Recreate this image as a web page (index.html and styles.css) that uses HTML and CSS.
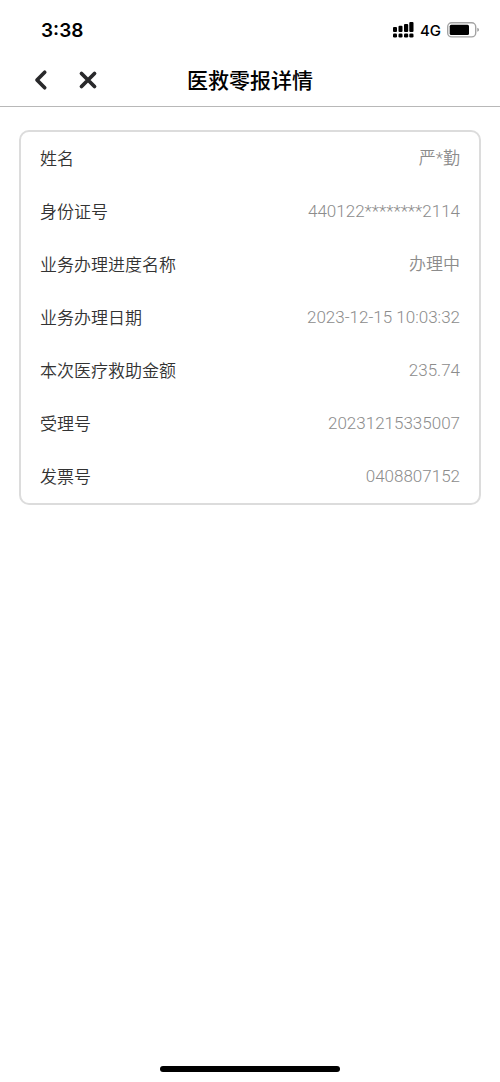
FILE: index.html
```html
<!DOCTYPE html>
<html lang="zh-CN">
<head>
<meta charset="utf-8">
<meta name="viewport" content="width=device-width, initial-scale=1">
<title>医救零报详情</title>
<link rel="stylesheet" href="styles.css">
</head>
<body>
<div class="status">
  <span class="time">3:38</span>
  <div class="indicators">
    <svg class="signal" width="21" height="16" viewBox="0 0 21 16" aria-hidden="true">
      <g fill="#000">
        <rect x="0" y="5" width="4" height="5" rx="1"/><rect x="5.5" y="3.8" width="4" height="6.2" rx="1"/><rect x="11" y="2" width="4.2" height="8" rx="1"/><rect x="16.3" y="0" width="4.2" height="10" rx="1"/>
        <rect x="0" y="11.5" width="4" height="4" rx="1.3"/><rect x="5.5" y="11.5" width="4" height="4" rx="1.3"/><rect x="11" y="11.5" width="4.2" height="4" rx="1.3"/><rect x="16.3" y="11.5" width="4.2" height="4" rx="1.3"/>
      </g>
    </svg>
    <span class="network">4G</span>
    <svg width="33" height="16" viewBox="0 0 33 16" aria-hidden="true">
      <rect x="0.7" y="0.7" width="28" height="14.2" rx="4" fill="#fff" stroke="#a3a3a3" stroke-width="1.4"/>
      <rect x="2.7" y="2.7" width="19.3" height="10.2" rx="1.5" fill="#000"/>
      <path d="M30.3 5.8q1.7.4 1.7 2t-1.7 2z" fill="#999"/>
    </svg>
  </div>
</div>
<header class="nav">
  <div class="actions">
    <button class="icon" type="button" aria-label="返回">
      <svg width="20" height="22" viewBox="0 0 20 22"><path d="M13.7 3.2 6 11l7.7 7.8" fill="none" stroke="#29292b" stroke-width="3.7" stroke-linecap="round" stroke-linejoin="round"/></svg>
    </button>
    <button class="icon" type="button" aria-label="关闭">
      <svg width="20" height="22" viewBox="0 0 20 22"><path d="m3.5 4.5 13 13m0-13-13 13" fill="none" stroke="#29292b" stroke-width="3.8" stroke-linecap="round"/></svg>
    </button>
  </div>
  <h1 class="title">医救零报详情</h1>
</header>
<main class="content">
  <dl class="card">
    <div class="row"><dt>姓名</dt><dd>严*勤</dd></div>
    <div class="row"><dt>身份证号</dt><dd>440122********2114</dd></div>
    <div class="row"><dt>业务办理进度名称</dt><dd>办理中</dd></div>
    <div class="row"><dt>业务办理日期</dt><dd>2023-12-15 10:03:32</dd></div>
    <div class="row"><dt>本次医疗救助金额</dt><dd>235.74</dd></div>
    <div class="row"><dt>受理号</dt><dd>20231215335007</dd></div>
    <div class="row"><dt>发票号</dt><dd>0408807152</dd></div>
  </dl>
</main>
<footer class="home"><div class="home-bar"></div></footer>
</body>
</html>
```
FILE: styles.css
```css
* {
  box-sizing: border-box;
}

body {
  margin: 0;
  min-height: 100vh;
  display: flex;
  flex-direction: column;
  background: #fff;
  color: #333;
  font-family: "Noto Sans CJK SC", sans-serif;
}

.status {
  display: flex;
  justify-content: space-between;
  align-items: center;
  height: 54px;
  padding: 6px 20px 0 41px;
  color: #000;
  font-family: Inter, sans-serif;
}

.time {
  font-size: 19px;
  font-weight: 600;
}

.indicators {
  display: flex;
  align-items: center;
  gap: 6px;
}

.network {
  font-size: 15px;
  font-weight: 500;
}

.nav {
  display: grid;
  grid-template-columns: 1fr auto 1fr;
  align-items: center;
  height: 53px;
  padding: 0 31px;
  border-bottom: 1px solid #b8b8b8;
}

.actions {
  display: flex;
  gap: 27px;
}

.icon {
  display: flex;
  padding: 0;
  border: 0;
  background: none;
}

.title {
  margin: 0;
  padding-bottom: 2px;
  color: #000;
  font-size: 21px;
  font-weight: 500;
  line-height: 30px;
}

.content {
  flex: 1;
  padding: 23px 19px;
}

.card {
  margin: 0;
  border: 2px solid #dcdcdc;
  border-radius: 10px;
}

.row {
  display: flex;
  justify-content: space-between;
  align-items: center;
  height: 53px;
  padding: 0 19px 2px;
  font-size: 17px;
  font-weight: 350;
  line-height: 24px;
}

.row dd {
  margin: 0;
  color: #8c8c8c;
  font-family: Roboto, "Noto Sans CJK SC", sans-serif;
}

.home {
  display: flex;
  justify-content: center;
  padding-bottom: 10px;
}

.home-bar {
  width: 36%;
  height: 6px;
  border-radius: 3px;
  background: #000;
}
```
